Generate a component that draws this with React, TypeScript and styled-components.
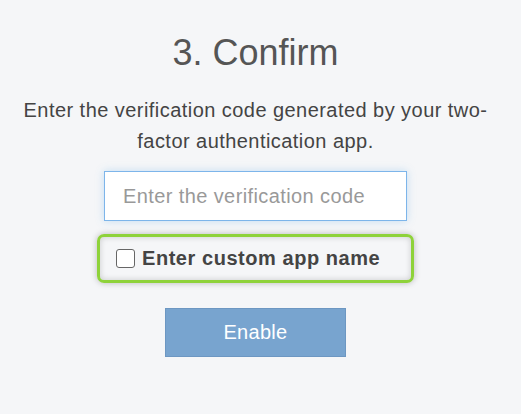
import React from 'react';
import styled, { createGlobalStyle } from 'styled-components';

const GlobalStyle = createGlobalStyle`
  html, body {
    margin: 0;
    padding: 0;
    background: #f5f6f8;
  }
  body {
    font-family: "Liberation Sans", Arial, sans-serif;
  }
`;

const Page = styled.div`
  width: 511px;
  min-height: 414px;
  display: flex;
  flex-direction: column;
  align-items: center;
  padding-top: 35px;
  box-sizing: border-box;
`;

const Title = styled.h1`
  margin: 0;
  font-size: 36px;
  line-height: 36px;
  font-weight: 400;
  color: #555;
`;

const Description = styled.p`
  margin: 24px 0 0;
  width: 480px;
  font-size: 20px;
  letter-spacing: 0.45px;
  line-height: 31px;
  color: #444;
  text-align: center;
`;

const CodeInput = styled.input`
  margin-top: 14px;
  width: 303px;
  height: 50px;
  box-sizing: border-box;
  padding: 0 18px;
  border: 1px solid #7db5ea;
  background: #fff;
  font-family: inherit;
  font-size: 20px;
  letter-spacing: 0.4px;
  color: #333;
  outline: none;
  box-shadow: 0 0 8px rgba(102, 175, 233, 0.35);

  &::placeholder {
    color: #999;
  }
`;

const CustomNameLabel = styled.label`
  margin-top: 13px;
  width: 317px;
  height: 49px;
  box-sizing: border-box;
  display: flex;
  align-items: center;
  gap: 7px;
  padding-left: 16px;
  border: 3px solid #8ed23a;
  border-radius: 7px;
  box-shadow: 0 0 6px rgba(0, 0, 0, 0.25), inset 0 0 6px rgba(0, 0, 0, 0.18);
  font-size: 20px;
  letter-spacing: 0.55px;
  font-weight: 700;
  color: #444;
  cursor: pointer;
`;

const Checkbox = styled.input.attrs({ type: 'checkbox' })`
  appearance: none;
  margin: 0;
  width: 19px;
  height: 19px;
  border: 1.5px solid #666;
  border-radius: 3px;
  background: #fff;
  box-sizing: border-box;
`;

const EnableButton = styled.button`
  margin-top: 25px;
  width: 181px;
  height: 49px;
  border: 1px solid #6d97c2;
  background: #78a4cf;
  color: #fff;
  font-family: inherit;
  font-size: 20px;
  letter-spacing: 0.3px;
  cursor: pointer;
`;

export default function App() {
  return (
    <>
      <GlobalStyle />
      <Page>
        <Title>3. Confirm</Title>
        <Description>
          Enter the verification code generated by your two-factor authentication app.
        </Description>
        <CodeInput placeholder="Enter the verification code" />
        <CustomNameLabel>
          <Checkbox />
          Enter custom app name
        </CustomNameLabel>
        <EnableButton>Enable</EnableButton>
      </Page>
    </>
  );
}
